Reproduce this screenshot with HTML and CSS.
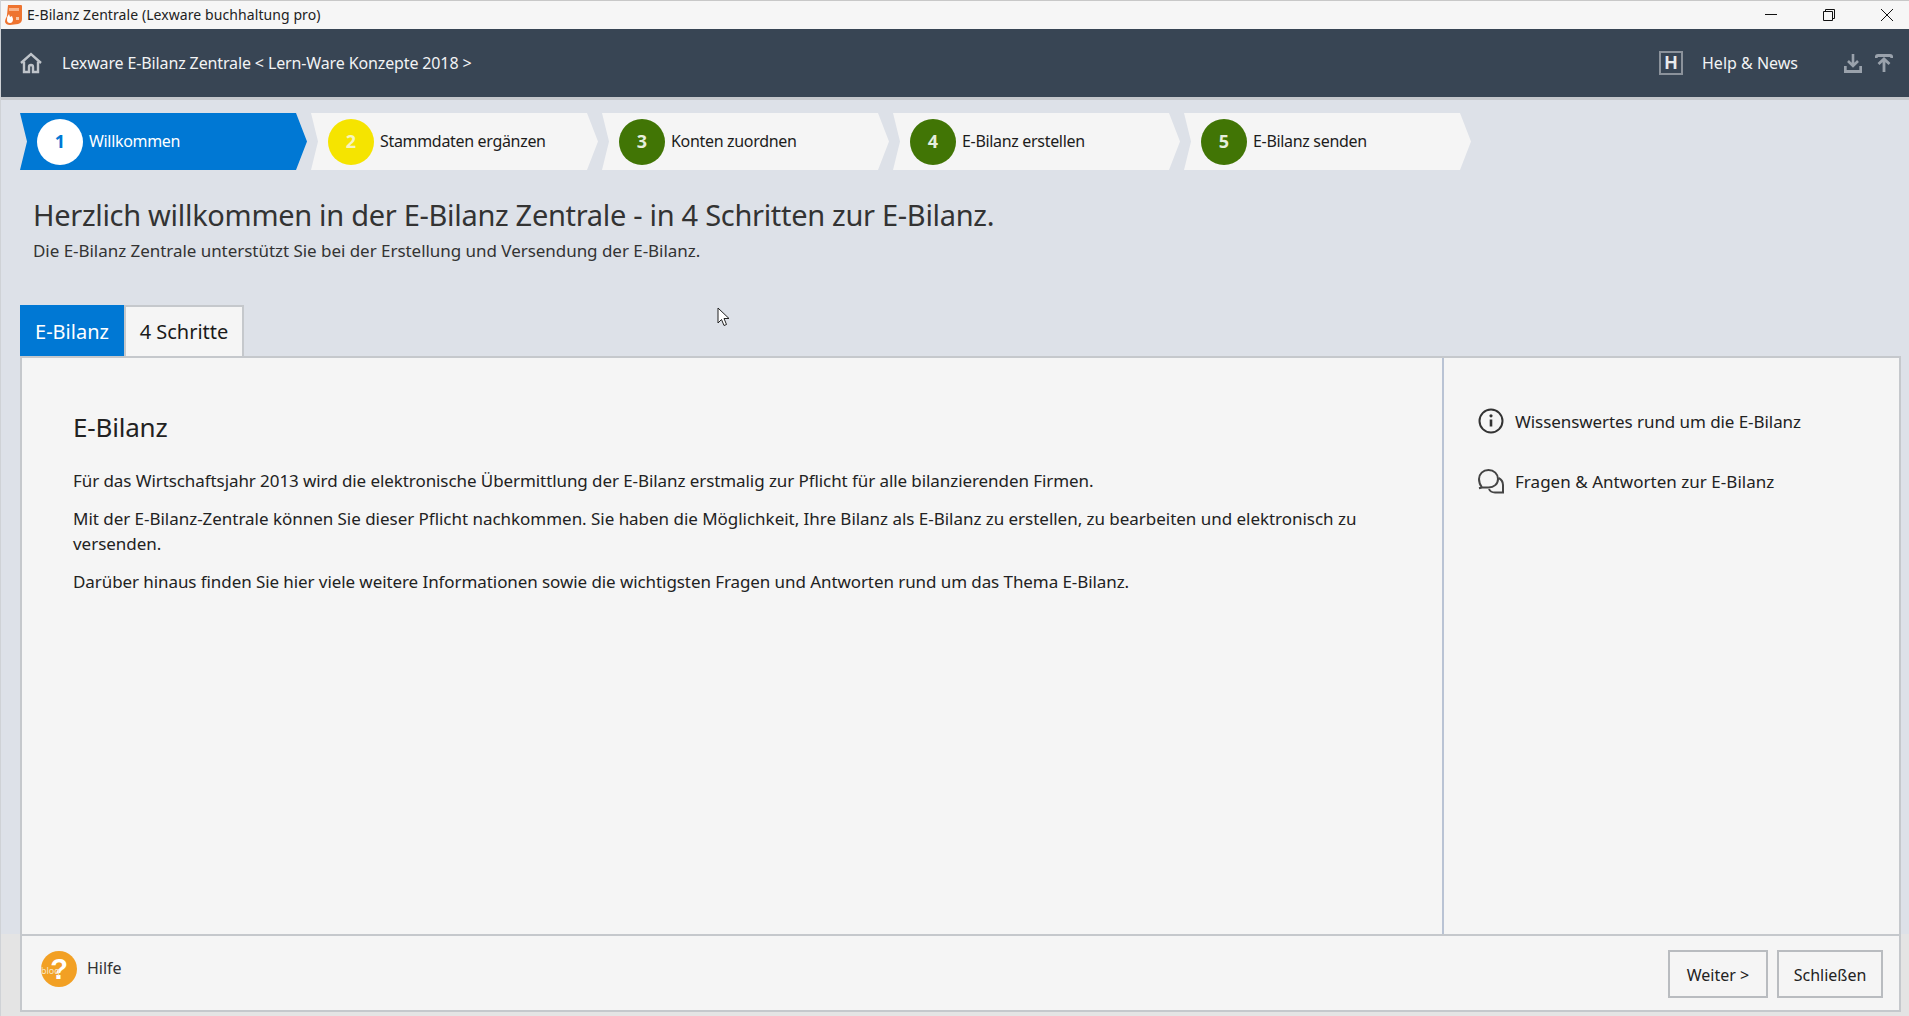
FILE: index.html
```html
<!DOCTYPE html>
<html lang="de">
<head>
<meta charset="utf-8">
<title>E-Bilanz Zentrale (Lexware buchhaltung pro)</title>
<link rel="stylesheet" href="styles.css">
</head>
<body>
<div class="titlebar">
  <svg class="app-icon" viewBox="0 0 17 20" width="17" height="20"><path d="M3 0h13q1 0 1 1v13q0 4-4 5l-8 1q-4 0-5-3 0-2 1-4 1-1 1-3z" fill="#ee7430"/><path d="M4 3h10v3H4z" fill="#f9b48a"/><path d="M2 15q0-4 2-6l1 3 2-1 1 3q0 4-3 4t-3-3z" fill="#fff"/><path d="M11 12h3v3h-3z" fill="#f9c8a8"/></svg>
  <span class="title-text">E-Bilanz Zentrale (Lexware buchhaltung pro)</span>
  <div class="win-controls">
    <svg width="14" height="14" viewBox="0 0 14 14"><path d="M1 6.500h12" stroke="#111" stroke-width="1" fill="none"/></svg>
    <svg width="14" height="14" viewBox="0 0 14 14"><path d="M1.500 3.500h9v9h-9zM3.500 3.500v-2h9v9h-2" stroke="#111" stroke-width="1" fill="none"/></svg>
    <svg width="14" height="14" viewBox="0 0 14 14"><path d="M1 1l12 12M13 1L1 13" stroke="#111" stroke-width="1" fill="none"/></svg>
  </div>
</div>
<header class="appbar">
  <svg class="home" width="22" height="22" viewBox="0 0 22 22" fill="none" stroke="#bfc4ca" stroke-width="2.400"><path d="M1 11L11 2l10 9"/><path d="M4 9.500V20h5v-5q0-2 2-2t2 2v5h5V9.500"/></svg>
  <span class="crumb">Lexware E-Bilanz Zentrale &lt; Lern-Ware Konzepte 2018 &gt;</span>
  <span class="h-box">H</span>
  <span class="news">Help &amp; News</span>
  <svg class="dl" width="18" height="19" viewBox="0 0 18 19" fill="none" stroke="#9aa2ac" stroke-width="2.600"><path d="M9 0v11M4 7l5 5 5-5"/><path d="M1.300 12v5.500h15.400V12" stroke-width="2.800"/></svg>
  <svg class="ul" width="18" height="18" viewBox="0 0 18 18" fill="none" stroke="#9aa2ac" stroke-width="2.800"><path d="M1.300 4V3q0-1.500 1.500-1.500h12.400q1.500 0 1.500 1.500v1"/><path d="M9 18V6M3.500 10L9 5l5.500 5"/></svg>
</header>
<nav class="steps">
  <div class="step step-active"><span class="dot dot-white">1</span><span class="step-label">Willkommen</span></div>
  <div class="step"><span class="dot dot-yellow">2</span><span class="step-label">Stammdaten ergänzen</span></div>
  <div class="step"><span class="dot dot-green">3</span><span class="step-label">Konten zuordnen</span></div>
  <div class="step"><span class="dot dot-green">4</span><span class="step-label">E-Bilanz erstellen</span></div>
  <div class="step"><span class="dot dot-green">5</span><span class="step-label">E-Bilanz senden</span></div>
</nav>
<section class="intro">
  <h1>Herzlich willkommen in der E-Bilanz Zentrale - in 4 Schritten zur E-Bilanz.</h1>
  <p>Die E-Bilanz Zentrale unterstützt Sie bei der Erstellung und Versendung der E-Bilanz.</p>
</section>
<div class="tabs">
  <div class="tab tab-active">E-Bilanz</div>
  <div class="tab">4 Schritte</div>
</div>
<main class="panel">
  <article class="content">
    <h2>E-Bilanz</h2>
    <p>Für das Wirtschaftsjahr 2013 wird die elektronische Übermittlung der E-Bilanz erstmalig zur Pflicht für alle bilanzierenden Firmen.</p>
    <p class="para-wide">Mit der E-Bilanz-Zentrale können Sie dieser Pflicht nachkommen. Sie haben die Möglichkeit, Ihre Bilanz als E-Bilanz zu erstellen, zu bearbeiten und elektronisch zu versenden.</p>
    <p>Darüber hinaus finden Sie hier viele weitere Informationen sowie die wichtigsten Fragen und Antworten rund um das Thema E-Bilanz.</p>
  </article>
  <aside class="links">
    <div class="link link-info">
      <svg width="26" height="26" viewBox="0 0 26 26" fill="none" stroke="#333"><circle cx="13" cy="13" r="11.500" stroke-width="2"/><path d="M13 11.500v7" stroke-width="2.600"/><circle cx="13" cy="7.800" r="1.600" fill="#333" stroke="none"/></svg>
      <span>Wissenswertes rund um die E-Bilanz</span>
    </div>
    <div class="link">
      <svg width="26" height="25" viewBox="0 0 26 25" fill="none" stroke="#444" stroke-width="2"><path d="M4 18.500C2 16 1 13 1 10 1 5 5 1 10.500 1S20 5 20 10s-4 8.500-9.500 8.500H4l-3 .8z"/><path d="M20.500 9c3 1.500 4.500 4 4.500 7v7.500h-8c-3 0-5-1-6-3.500"/></svg>
      <span>Fragen &amp; Antworten zur E-Bilanz</span>
    </div>
  </aside>
</main>
<footer class="footer">
  <div class="footer-inner">
    <div class="help">
      <span class="help-icon"><span class="help-q">?</span><span class="help-ghost">bloq</span></span>
      <span class="help-label">Hilfe</span>
    </div>
    <div class="buttons">
      <button class="btn btn-next">Weiter &gt;</button>
      <button class="btn btn-close">Schließen</button>
    </div>
  </div>
</footer>
<svg class="cursor" width="13" height="21" viewBox="0 0 13 21"><path d="M1 1v15l3.500-3.500 2.500 6 2.500-1-2.500-6h5z" fill="#fff" stroke="#222" stroke-width="1"/></svg>
</body>
</html>
```

FILE: styles.css
```css
* { box-sizing: border-box; }
html, body { margin: 0; height: 100%; overflow: hidden; }
body {
  position: relative;
  display: flex;
  flex-direction: column;
  background: #dde1e8;
  font-family: "Noto Sans", "Open Sans", sans-serif;
  color: #222;
  border-left: 1px solid #cfd2d6;
}
.titlebar {
  flex: 0 0 29px;
  display: flex;
  align-items: center;
  background: #f6f6f6;
  border-top: 1px solid #c8c8c8;
  padding-left: 4px;
}
.app-icon { margin-right: 5px; }
.title-text { font-size: 14px; letter-spacing: 0.08px; color: #222; position: relative; top: -1px; }
.win-controls { margin-left: auto; display: flex; gap: 44px; padding-right: 15px; }
.appbar {
  flex: 0 0 71px;
  display: flex;
  align-items: center;
  background: #384554;
  border-bottom: 3px solid #c5c8cc;
  color: #f2f3f4;
  padding-left: 19px;
}
.crumb { margin-left: 20px; font-size: 16px; letter-spacing: -0.13px; }
.h-box {
  margin-left: auto;
  width: 24px; height: 24px;
  border: 2px solid #8b929b;
  display: flex; align-items: center; justify-content: center;
  font-weight: 700; font-size: 18px; color: #e8eaec;
  font-family: "Liberation Sans", sans-serif;
}
.news { margin-left: 19px; font-size: 16px; }
.dl { margin-left: 46px; }
.ul { margin-left: 13px; margin-right: 16px; }
.steps { display: flex; gap: 4px; padding: 13px 0 0 19px; }
.step {
  flex: 0 0 287px;
  height: 57px;
  display: flex;
  align-items: center;
  background: #f5f5f5;
  clip-path: polygon(0 0, 276px 0, 287px 50%, 276px 100%, 0 100%, 7px 50%);
  padding-left: 17px;
  font-size: 16px;
  color: #1c1c1c;
}
.step-label { letter-spacing: -0.32px; margin-bottom: 2px; }
.step-active { background: #0078d4; color: #fff; }
.dot {
  width: 46px; height: 46px;
  border-radius: 50%;
  display: flex; align-items: center; justify-content: center;
  margin-right: 6px;
  padding-bottom: 1px;
  font-size: 18px; font-weight: 700;
  color: #f1f1f1;
}
.dot-white { background: #fff; color: #0078d4; }
.dot-yellow { background: #f5e400; color: #f7f4c0; }
.dot-green { background: #417505; color: #e6eedd; }
.intro { padding: 27px 0 0 32px; height: 135px; }
.intro h1 { margin: 0; font-size: 29px; font-weight: 400; line-height: 36px; letter-spacing: -0.3px; color: #333; }
.intro p { margin: 6px 0 0; font-size: 17px; line-height: 23px; letter-spacing: -0.04px; color: #333; }
.tabs { display: flex; padding-left: 19px; height: 51px; }
.tab {
  display: flex; align-items: center; justify-content: center;
  width: 120px;
  background: #f5f5f5;
  border: 2px solid #c5c8cc;
  border-bottom: 0;
  font-size: 20px;
  color: #1a1a1a;
}
.tab-active {
  width: 104px;
  padding-top: 2px;
  background: #0078d4;
  border: 0;
  color: #fff;
}
.panel {
  flex: 1;
  display: flex;
  margin: 0 8px 0 19px;
  background: #f5f5f5;
  border: 2px solid #c5c8cc;
  border-bottom: 0;
  min-height: 0;
}
.content { flex: 1; padding: 52px 40px 0 51px; font-size: 17px; line-height: 25px; letter-spacing: -0.08px; border-right: 2px solid #b9c3d4; color: #222; }
.content h2 { margin: 0 0 24px; font-size: 26px; font-weight: 400; line-height: 34px; letter-spacing: -0.2px; }
.content p { margin: 0 0 13px; }
.content .para-wide { letter-spacing: -0.03px; }
.links { flex: 0 0 455px; padding-top: 50px; }
.link { display: flex; align-items: center; height: 26px; margin: 0 0 34px 34px; font-size: 17px; letter-spacing: 0.03px; color: #222; }
.link-info { letter-spacing: -0.07px; }
.link span { margin-left: 11px; }
.footer { flex: 0 0 82px; background: #e4e4e4; padding: 0 8px 4px 19px; }
.footer-inner {
  height: 100%;
  display: flex;
  justify-content: space-between;
  background: #f5f5f5;
  border: 2px solid #c5c8cc;
}
.help { display: flex; align-items: flex-start; padding: 15px 0 0 19px; }
.help-icon {
  position: relative;
  width: 36px; height: 36px;
  border-radius: 50%;
  background: #f2a024;
  display: flex; align-items: center; justify-content: center;
  overflow: hidden;
}
.help-q { font-size: 29px; font-weight: 700; color: #fff; font-family: "Liberation Sans", sans-serif; }
.help-ghost { position: absolute; left: 0; top: 13px; font-size: 9px; color: #f7e6c8; }
.help-label { margin: 6px 0 0 10px; font-size: 16px; color: #333; }
.buttons { display: flex; gap: 9px; padding: 14px 16px 0 0; }
.btn {
  height: 48px;
  background: #f5f5f5;
  border: 2px solid #b9bcc0;
  font: inherit;
  font-size: 16px;
  color: #222;
  padding: 2px 0 0;
}
.btn-next { width: 100px; }
.btn-close { width: 106px; }
.cursor { position: absolute; left: 716px; top: 307px; }
```
